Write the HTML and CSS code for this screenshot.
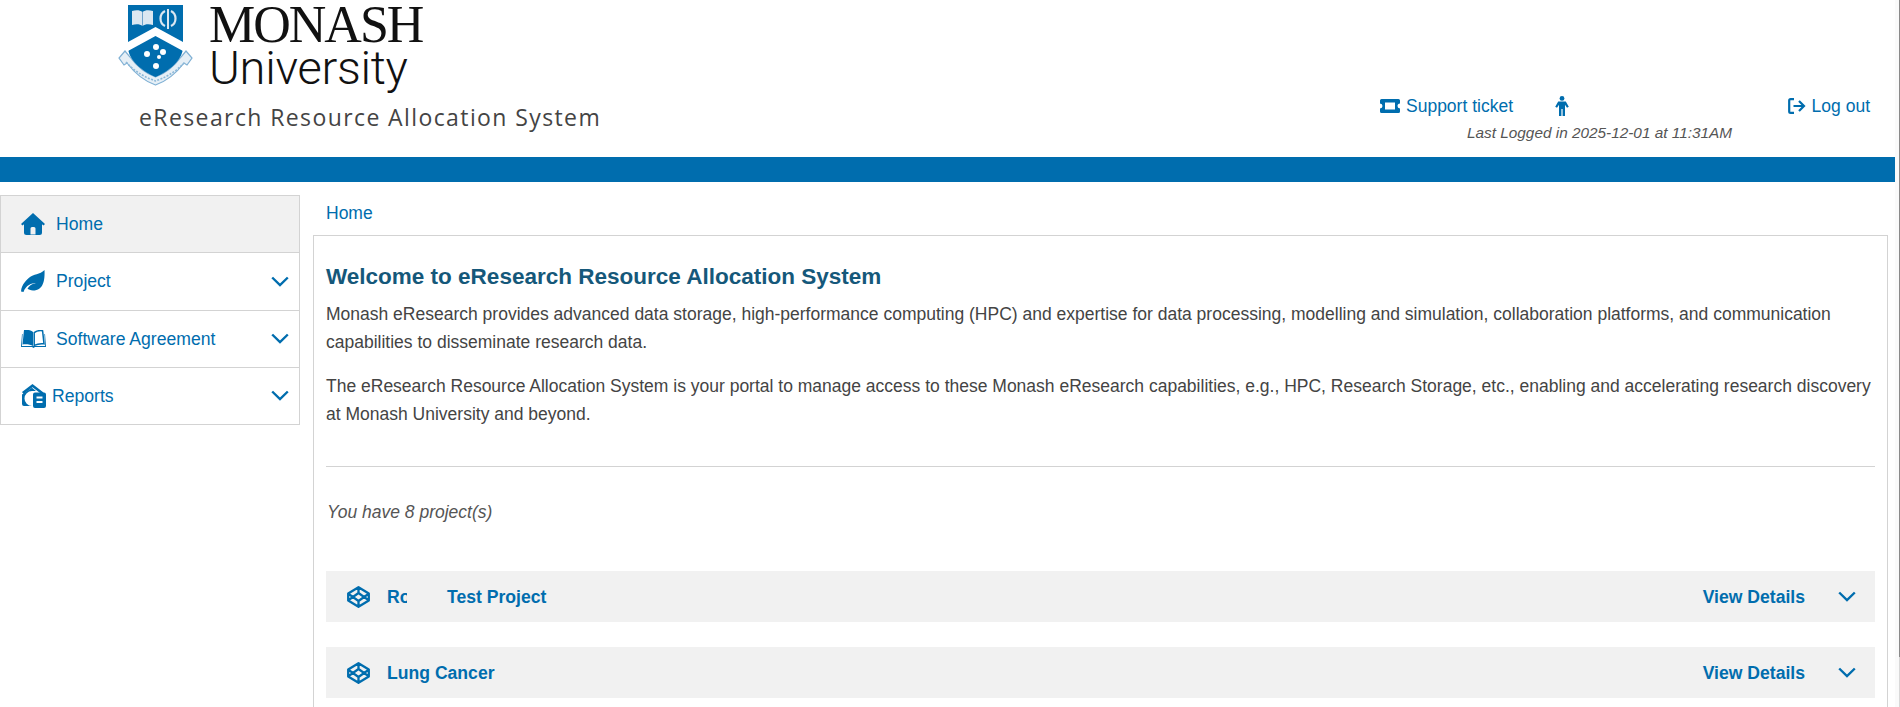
FILE: index.html
```html
<!DOCTYPE html>
<html lang="en">
<head>
<meta charset="utf-8">
<title>eResearch Resource Allocation System</title>
<link rel="stylesheet" href="styles.css">
</head>
<body>
<div class="page">
  <header class="header">
    <div class="brand">
      <div class="logo">
        <svg class="crest" viewBox="0 0 75 82" width="75" height="82" aria-hidden="true">
          <path d="M7 46 L1 53 L6 60 L9 58 C18 70 29 77 37.5 80 C46 77 57 70 66 58 L69 60 L74 53 L68 46 L63 52 C55 63 46 69 37.5 72 C29 69 20 63 12 52Z" fill="#e6eff6" stroke="#7fb0d4" stroke-width="1.2"/>
          <path d="M8 57 C18 68 29 73 37.5 76 C46 73 57 68 67 57" fill="none" stroke="#8cb8d8" stroke-width="1.6" stroke-dasharray="2 1.4"/>
          <path d="M10 0 H65 V42 C65 54 52 66 37.5 72 C23 66 10 54 10 42Z" fill="#006dae"/>
          <path d="M10 37 L37.5 22 L65 37 V46 L37.5 31 L10 46Z" fill="#fff"/>
          <path d="M14 6 C18 5 22 5 24.5 7 C27 5 31 5 35 6 V20 C31 19 27 19 24.5 21 C22 19 18 19 14 20Z" fill="#dbe7f1"/>
          <path d="M24.5 7 V21" stroke="#6fa3cc" stroke-width="1"/>
          <path d="M47 6 C41 9 41 18 47 21 M53 6 C59 9 59 18 53 21" fill="none" stroke="#dbe7f1" stroke-width="2.2"/>
          <path d="M50 4 V24" stroke="#dbe7f1" stroke-width="2"/>
          <circle cx="38" cy="42" r="3" fill="#fff"/>
          <circle cx="29" cy="49" r="3" fill="#fff"/>
          <circle cx="45" cy="47" r="3" fill="#fff"/>
          <circle cx="41" cy="52" r="2" fill="#fff"/>
          <circle cx="38" cy="61" r="3" fill="#fff"/>
        </svg>
        <div class="wordmark">
          <div class="wm-top">MONASH</div>
          <div class="wm-bottom">University</div>
        </div>
      </div>
      <div class="system-name">eResearch Resource Allocation System</div>
    </div>
    <div class="user-box">
      <nav class="user-links">
        <a class="user-link ticket" href="#">
          <svg viewBox="0 0 20 14" width="20" height="14" aria-hidden="true"><path fill-rule="evenodd" d="M1.5 0 H18.5 A1.5 1.5 0 0 1 20 1.5 V4.5 A2.5 2.5 0 0 0 20 9.5 V12.5 A1.5 1.5 0 0 1 18.5 14 H1.5 A1.5 1.5 0 0 1 0 12.5 V9.5 A2.5 2.5 0 0 0 0 4.5 V1.5 A1.5 1.5 0 0 1 1.5 0Z M5 3.5 V10.5 H15 V3.5Z" fill="#006dae"/></svg>
          Support ticket
        </a>
        <a class="user-link person" href="#" aria-label="Profile">
          <svg viewBox="0 0 14 20" width="14" height="20" aria-hidden="true"><circle cx="7" cy="2.4" r="2.4" fill="#006dae"/><path d="M3.2 5.4 H10.8 L13.8 10.8 L12 11.8 L10 8.8 V20 H7.6 V13 H6.4 V20 H4 V8.8 L2 11.8 L0.2 10.8Z" fill="#006dae"/></svg>
        </a>
        <a class="user-link logout" href="#">
          <svg viewBox="0 0 18 16" width="18" height="16" aria-hidden="true"><path d="M6 1.2 H2.6 A1.4 1.4 0 0 0 1.2 2.6 V13.4 A1.4 1.4 0 0 0 2.6 14.8 H6" fill="none" stroke="#006dae" stroke-width="2.2"/><path d="M5.5 8 H16 M11 3 L16 8 L11 13" fill="none" stroke="#006dae" stroke-width="2.2"/></svg>
          Log out
        </a>
      </nav>
      <div class="last-login">Last Logged in 2025-12-01 at 11:31AM</div>
    </div>
  </header>
  <div class="band"></div>
  <main class="main">
    <aside class="sidebar">
      <a class="side-item active" href="#">
        <svg class="side-icon" viewBox="0 0 24 22" width="24" height="22" aria-hidden="true"><path fill-rule="evenodd" d="M12 0 L24 11 L22.5 12.5 L21 11.2 V19.5 A2.5 2.5 0 0 1 18.5 22 H5.5 A2.5 2.5 0 0 1 3 19.5 V11.2 L1.5 12.5 L0 11Z M9.5 21.5 V15.5 A1.5 1.5 0 0 1 11 14 H13 A1.5 1.5 0 0 1 14.5 15.5 V21.5Z" fill="#006dae"/></svg>
        <span>Home</span>
      </a>
      <a class="side-item" href="#">
        <svg class="side-icon" viewBox="0 0 24 22" width="24" height="22" aria-hidden="true"><path d="M23.5 0 C24 10 22.5 20.5 12 20.5 C9.5 20.5 7.5 19.5 6.5 18.8 C8 15.5 11 14 15 13 C10.5 13 5 15 2.5 22 L0 21.5 C0.5 14 6 9.5 9 7 C12 4.5 19 4.5 23.5 0Z" fill="#006dae"/></svg>
        <span>Project</span>
        <svg class="chev" viewBox="0 0 18 11" width="18" height="11" aria-hidden="true"><path d="M1.2 1.5 L9 9 L16.8 1.5" fill="none" stroke="#006dae" stroke-width="2.4"/></svg>
      </a>
      <a class="side-item book" href="#">
        <svg class="side-icon" viewBox="0 0 25 18" width="25" height="18" aria-hidden="true"><path d="M3 0 C6 -0.5 10 0 12 2 V16 C9.5 14.5 5 14 1.5 14.6Z" fill="#006dae"/><path d="M13.2 2.6 C15.5 0.8 19 0.4 21.6 0.8 L23 13.8 C20 13.4 16 14 13.2 15.4Z" fill="none" stroke="#006dae" stroke-width="1.5"/><path d="M1 4 L0 17 H11 L12.5 18 L14 17 H25 L24 4 L23.4 4 L24 16 H1 L1.6 4Z" fill="#006dae"/></svg>
        <span>Software Agreement</span>
        <svg class="chev" viewBox="0 0 18 11" width="18" height="11" aria-hidden="true"><path d="M1.2 1.5 L9 9 L16.8 1.5" fill="none" stroke="#006dae" stroke-width="2.4"/></svg>
      </a>
      <a class="side-item reports" href="#">
        <svg class="side-icon" viewBox="0 0 25 24" width="25" height="24" aria-hidden="true"><path d="M11.5 0 L22.5 8.5 L21 10.5 L11.5 3.2 L2.6 10 L1 8Z" fill="#006dae"/><path d="M1 10.5 L11 3.8 L15 7 H11 A2.5 2.5 0 0 0 11 22 H3 A2 2 0 0 1 1 20Z" fill="#006dae"/><path fill-rule="evenodd" d="M14 8.5 H23 A2 2 0 0 1 25 10.5 V22 A2 2 0 0 1 23 24 H14 A2 2 0 0 1 12 22 V10.5 A2 2 0 0 1 14 8.5Z M15.5 12.5 V14.5 H21.5 V12.5Z M15.5 17 V19 H21.5 V17Z" fill="#006dae"/></svg>
        <span>Reports</span>
        <svg class="chev" viewBox="0 0 18 11" width="18" height="11" aria-hidden="true"><path d="M1.2 1.5 L9 9 L16.8 1.5" fill="none" stroke="#006dae" stroke-width="2.4"/></svg>
      </a>
    </aside>
    <section class="content">
      <div class="crumbs"><a href="#">Home</a></div>
      <div class="panel">
        <h1>Welcome to eResearch Resource Allocation System</h1>
        <p>Monash eResearch provides advanced data storage, high-performance computing (HPC) and expertise for data processing, modelling and simulation, collaboration platforms, and communication capabilities to disseminate research data.</p>
        <p>The eResearch Resource Allocation System is your portal to manage access to these Monash eResearch capabilities, e.g., HPC, Research Storage, etc., enabling and accelerating research discovery at Monash University and beyond.</p>
        <hr>
        <div class="count">You have 8 project(s)</div>
        <div class="project">
          <svg class="cube" viewBox="0 0 23 22" width="23" height="22" aria-hidden="true"><path d="M11.5 1.2 L21.8 7.6 V14.4 L11.5 20.8 L1.2 14.4 V7.6Z M11.5 1.2 V7 M11.5 15 V20.8 M1.2 7.6 L11.5 15 L21.8 7.6 M1.2 14.4 L11.5 7 L21.8 14.4" fill="none" stroke="#006dae" stroke-width="2.3" stroke-linejoin="round"/></svg>
          <span class="project-name"><span class="clip">Ro</span><span class="redacted"></span>Test Project</span>
          <a class="view" href="#">View Details</a>
          <svg class="chev" viewBox="0 0 18 11" width="18" height="11" aria-hidden="true"><path d="M1.2 1.5 L9 9 L16.8 1.5" fill="none" stroke="#006dae" stroke-width="2.4"/></svg>
        </div>
        <div class="project">
          <svg class="cube" viewBox="0 0 23 22" width="23" height="22" aria-hidden="true"><path d="M11.5 1.2 L21.8 7.6 V14.4 L11.5 20.8 L1.2 14.4 V7.6Z M11.5 1.2 V7 M11.5 15 V20.8 M1.2 7.6 L11.5 15 L21.8 7.6 M1.2 14.4 L11.5 7 L21.8 14.4" fill="none" stroke="#006dae" stroke-width="2.3" stroke-linejoin="round"/></svg>
          <span class="project-name">Lung Cancer</span>
          <a class="view" href="#">View Details</a>
          <svg class="chev" viewBox="0 0 18 11" width="18" height="11" aria-hidden="true"><path d="M1.2 1.5 L9 9 L16.8 1.5" fill="none" stroke="#006dae" stroke-width="2.4"/></svg>
        </div>
      </div>
    </section>
  </main>
</div>
<div class="scrollbar"><div class="thumb"></div></div>
</body>
</html>
```
FILE: styles.css
```css
html, body {
  margin: 0;
  padding: 0;
  height: 707px;
  overflow: hidden;
  background: #fff;
}
body {
  display: flex;
  font-family: "Liberation Sans", Arial, sans-serif;
  font-size: 17.5px;
  color: #444;
}
a {
  color: #006dae;
  text-decoration: none;
}
.page {
  width: 1895px;
  flex: none;
}
.scrollbar {
  flex: 1;
  background: #fafafa;
  display: flex;
  justify-content: flex-end;
  border-right: 1px solid #d8d8d8;
}
.thumb {
  width: 1px;
  height: 657px;
  margin-right: -1px;
  background: #8a8a8a;
}
.header {
  height: 157px;
  display: flex;
  justify-content: space-between;
}
.brand {
  margin-left: 118px;
}
.logo {
  display: flex;
  padding-top: 5px;
  height: 102px;
  box-sizing: border-box;
}
.crest {
  flex: none;
}
.wordmark {
  margin-left: 16px;
  color: #111;
}
.wm-top {
  font-family: "Liberation Serif", serif;
  font-size: 52px;
  letter-spacing: -2px;
  line-height: 40px;
  height: 40px;
}
.wm-bottom {
  font-family: Roboto, "Liberation Sans", sans-serif;
  font-weight: 300;
  font-size: 47px;
  letter-spacing: -0.3px;
  line-height: 46px;
}
.system-name {
  margin-left: 21px;
  font-family: "Open Sans", sans-serif;
  font-size: 23px;
  letter-spacing: 1.4px;
  line-height: 30px;
  color: #444;
}
.user-box {
  width: 515px;
  padding-top: 94px;
  box-sizing: border-box;
}
.user-links {
  display: flex;
  align-items: center;
  height: 24px;
}
.user-link {
  display: flex;
  align-items: center;
  gap: 6px;
  line-height: 22px;
}
.person {
  margin-left: 42px;
}
.logout {
  margin-left: auto;
  margin-right: 25px;
}
.last-login {
  margin: 6px 0 0 87px;
  font-size: 15.35px;
  font-style: italic;
  line-height: 18px;
  color: #555;
}
.band {
  height: 25px;
  background: #006dae;
}
.main {
  display: flex;
  align-items: flex-start;
  padding-top: 13px;
  gap: 13px;
}
.sidebar {
  width: 300px;
  flex: none;
  box-sizing: border-box;
  border: 1px solid #d3d3d3;
  font-size: 17.6px;
}
.side-item {
  display: flex;
  align-items: center;
  height: 56.25px;
  padding: 0 10px 0 20px;
  border-bottom: 1px solid #d3d3d3;
}
.side-item:last-child {
  border-bottom: 0;
}
.side-item.active {
  background: #f1f1f1;
}
.side-icon {
  flex: none;
  margin-right: 11px;
}
.book .side-icon {
  margin-right: 10px;
}
.book span,
.reports span {
  padding-top: 1px;
}
.reports .side-icon {
  margin-right: 6px;
}
.side-item .chev {
  margin-left: auto;
}
.chev {
  flex: none;
}
.content {
  width: 1575px;
  flex: none;
}
.crumbs {
  height: 40px;
  padding-left: 13px;
  line-height: 36px;
}
.panel {
  border: 1px solid #d3d3d3;
  padding: 0 12px;
  height: 600px;
  box-sizing: border-box;
}
h1 {
  margin: 27px 0 0;
  font-size: 22.5px;
  line-height: 28px;
  font-weight: 700;
  color: #15587a;
}
p {
  margin: 0 0 16px;
  line-height: 28px;
}
h1 + p {
  margin-top: 9px;
}
hr {
  border: 0;
  border-top: 1px solid #d3d3d3;
  margin: 38px 0 0;
}
.count {
  margin-top: 35px;
  margin-left: 1px;
  font-style: italic;
  line-height: 20px;
  color: #555;
}
.project {
  display: flex;
  align-items: center;
  height: 51px;
  margin-top: 25px;
  padding: 0 19px 0 21px;
  background: #f1f1f1;
  color: #006dae;
  font-weight: 700;
  font-size: 17.6px;
}
.count + .project {
  margin-top: 49px;
}
.cube {
  flex: none;
  margin-right: 17px;
}
.project-name,
.view {
  padding-top: 2px;
}
.project-name {
  display: flex;
  white-space: pre;
}
.clip {
  width: 20px;
  overflow: hidden;
}
.redacted {
  width: 40px;
  align-self: stretch;
  background: #f1f1f1;
}
.view {
  margin-left: auto;
  margin-right: 33px;
}
```
